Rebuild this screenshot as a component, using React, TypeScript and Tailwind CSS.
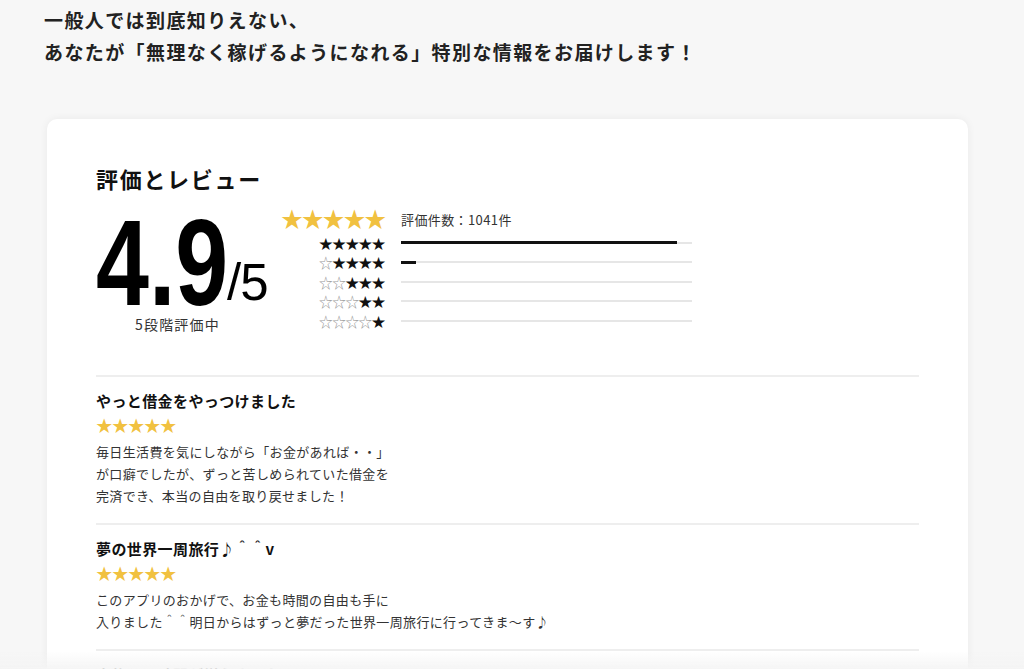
import React from "react";

const jp = "font-['Noto_Sans_CJK_JP','Noto_Sans',sans-serif]";

const breakdown = [
  { filled: 5, ratio: 95 },
  { filled: 4, ratio: 5 },
  { filled: 3, ratio: 0 },
  { filled: 2, ratio: 0 },
  { filled: 1, ratio: 0 },
];

const reviews = [
  {
    title: "やっと借金をやっつけました",
    body: [
      "毎日生活費を気にしながら「お金があれば・・」",
      "が口癖でしたが、ずっと苦しめられていた借金を",
      "完済でき、本当の自由を取り戻せました！",
    ],
  },
  {
    title: "夢の世界一周旅行♪＾＾v",
    body: [
      "このアプリのおかげで、お金も時間の自由も手に",
      "入りました＾＾明日からはずっと夢だった世界一周旅行に行ってきま〜す♪",
    ],
  },
  {
    title: "家族との時間が増えました",
    body: [
      "毎月の収入が安定して、家族と過ごす時間が",
      "ぐっと増えました。本当に感謝しています！",
    ],
  },
];

function StarRow({ filled }: { filled: number }) {
  return (
    <span className="relative -top-[1px] text-[13.6px] leading-none tracking-[-0.4px] whitespace-nowrap">
      {Array.from({ length: 5 }).map((_, i) =>
        i < 5 - filled ? (
          <span key={i} className="text-[#9a9a9a]">
            ☆
          </span>
        ) : (
          <span key={i} className="text-[#111]">
            ★
          </span>
        )
      )}
    </span>
  );
}

function RatingSummary() {
  return (
    <div className="mt-[8px] flex">
      <div className="w-[185px] shrink-0">
        <div className="flex h-[112px] items-start">
          <div className="w-[131px] shrink-0 pt-[11px]">
            <span className="inline-block origin-left scale-x-[0.78] whitespace-nowrap font-['Liberation_Sans',Arial,sans-serif] text-[122px] font-bold leading-[100px] text-black">
              4.9
            </span>
          </div>
          <span className="mt-[55px] whitespace-nowrap font-['Liberation_Sans',Arial,sans-serif] text-[51px] leading-none tracking-[-1px] text-black">
            /5
          </span>
        </div>
        <p className="ml-[39px] text-[14px] leading-[20px] tracking-[1.2px] text-[#333]">5段階評価中</p>
      </div>

      <div className="pt-[2px]">
        <div className="flex h-[28px] items-center">
          <span className="relative -top-[1px] w-[104px] text-right text-[22px] leading-none tracking-[-1.2px] whitespace-nowrap text-[#f1c140]">
            ★★★★★
          </span>
          <span className="ml-[16px] pt-[3px] text-[13px] tracking-[0.4px] text-[#333]">評価件数：1041件</span>
        </div>
        <div className="mt-[1px]">
          {breakdown.map((row) => (
            <div key={row.filled} className="flex h-[19.5px] items-center">
              <div className="w-[104px] text-right">
                <StarRow filled={row.filled} />
              </div>
              <div className="relative ml-[16px] h-[2px] w-[291px] bg-[#e6e6e6]">
                <div
                  className="absolute left-0 top-[-0.5px] h-[3px] bg-[#111]"
                  style={{ width: `${row.ratio}%` }}
                />
              </div>
            </div>
          ))}
        </div>
      </div>
    </div>
  );
}

export default function App() {
  return (
    <div className={`relative min-h-screen bg-[#f7f7f7] ${jp}`}>
      <div className="px-[44px] pt-[4px] text-[19px] font-bold leading-[32px] tracking-[1.4px] text-[#222]">
        <p>一般人では到底知りえない、</p>
        <p>あなたが「無理なく稼げるようになれる」特別な情報をお届けします！</p>
      </div>

      <div className="mx-[47px] mt-[51px] w-[921px] rounded-[10px] bg-white px-[49px] pb-[40px] pt-[43px] shadow-[0_0_8px_rgba(0,0,0,0.06)]">
        <h2 className="text-[22px] font-bold leading-[32px] tracking-[1.7px] text-[#111]">評価とレビュー</h2>

        <RatingSummary />

        <div className="mt-[41px]">
          {reviews.map((review) => (
            <div key={review.title} className="border-t-2 border-[#eeeeee] pb-[16px] pt-[12px]">
              <h3 className="text-[15px] font-bold leading-[24px] tracking-[0.4px] text-[#111]">{review.title}</h3>
              <div className="text-[16.5px] leading-[24px] tracking-[-0.5px] text-[#f1c140]">★★★★★</div>
              <div className="mt-[4px] text-[13px] leading-[22px] tracking-[0.35px] text-[#333]">
                {review.body.map((line) => (
                  <p key={line}>{line}</p>
                ))}
              </div>
            </div>
          ))}
        </div>
      </div>

      {/* soft fade along the bottom edge of the viewport */}
      <div className="pointer-events-none fixed inset-x-0 bottom-0 h-[18px] bg-gradient-to-b from-[#f7f7f7]/0 to-[#f4f4f4]/90" />
    </div>
  );
}
